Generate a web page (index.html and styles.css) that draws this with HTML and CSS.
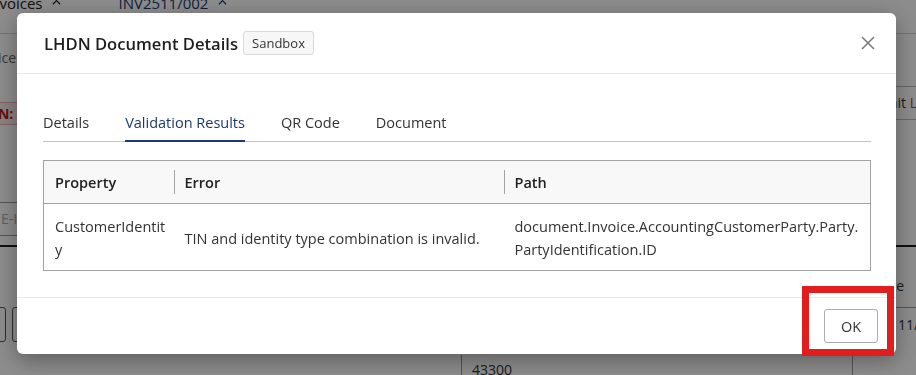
FILE: index.html
```html
<!DOCTYPE html>
<html lang="en">
<head>
  <meta charset="UTF-8">
  <meta name="viewport" content="width=device-width, initial-scale=1.0">
  <title>LHDN Document Details</title>
  <link rel="stylesheet" href="styles.css">
</head>
<body>
  <!-- page that sits behind the dialog -->
  <div class="app">
    <nav class="app-tabs">
      <span class="app-tab">Invoices
        <svg class="caret" viewBox="0 0 10 6"><path d="M1 5.5L5 1.5L9 5.5"/></svg>
      </span>
      <span class="app-tab active">INV2511/002
        <svg class="caret" viewBox="0 0 10 6"><path d="M1 5.5L5 1.5L9 5.5"/></svg>
      </span>
    </nav>
    <div class="app-crumb"><span>Invoice</span></div>
    <div class="app-bar">
      <span class="app-status">LHDN:</span>
      <span class="app-submit">Submit <b>LHDN</b></span>
    </div>
    <div class="app-form">
      <span class="app-input">E-Invoice No.</span>
    </div>
    <div class="app-line"></div>
    <div class="app-head"><span class="app-label">Date</span></div>
    <div class="app-actions">
      <div class="app-btns">
        <span class="app-btn"></span>
        <span class="app-btn"></span>
      </div>
      <span class="app-date">11/11/2025</span>
    </div>
    <div class="app-rows">
      <span class="app-cell"></span>
      <span class="app-cell">43300</span>
      <span class="app-cell"></span>
    </div>
  </div>

  <div class="backdrop"></div>

  <div class="modal">
    <div class="modal-header">
      <h3 class="modal-title">LHDN Document Details</h3>
      <span class="badge">Sandbox</span>
      <button class="close" aria-label="Close">
        <svg viewBox="0 0 14 14"><path d="M1 1L13 13M13 1L1 13"/></svg>
      </button>
    </div>

    <div class="modal-body">
      <div class="tabs">
        <a class="tab">Details</a>
        <a class="tab active">Validation Results</a>
        <a class="tab">QR Code</a>
        <a class="tab">Document</a>
      </div>

      <table class="results">
        <colgroup>
          <col class="col-prop">
          <col class="col-error">
          <col>
        </colgroup>
        <thead>
          <tr>
            <th>Property</th>
            <th>Error</th>
            <th>Path</th>
          </tr>
        </thead>
        <tbody>
          <tr>
            <td>CustomerIdentity</td>
            <td>TIN and identity type combination is invalid.</td>
            <td>document.Invoice.AccountingCustomerParty.Party.PartyIdentification.ID</td>
          </tr>
        </tbody>
      </table>
    </div>

    <div class="modal-footer">
      <button class="btn">OK</button>
    </div>
  </div>

  <!-- highlight drawn over the screenshot -->
  <div class="callout"></div>
</body>
</html>
```

FILE: styles.css
```css
body {
  margin: 0;
  font-family: 'Open Sans', 'Noto Sans', sans-serif;
  background-color: #ffffff;
  color: #333333;
  overflow: hidden;
}

/* background page */
.app {
  width: 916px;
  height: 375px;
  overflow: hidden;
  font-size: 14px;
}

.app-tabs {
  display: flex;
  box-sizing: border-box;
  height: 34px;
  border-bottom: 1px solid #d4d4d4;
}

.app-tab {
  display: flex;
  align-items: flex-start;
  gap: 10px;
  height: 20px;
  margin-top: -7px;
  margin-left: -14px;
  font-size: 15px;
  line-height: 20px;
  color: #222;
}

.app-tab.active {
  margin-left: 57px;
  color: #1b3b6f;
}

.caret {
  width: 9px;
  height: 6px;
  margin-top: 6px;
  fill: none;
  stroke: currentColor;
  stroke-width: 1.4;
}

.app-crumb {
  padding: 14px 0 18px;
  line-height: 20px;
  color: #666;
}

.app-crumb span {
  margin-left: -30px;
}

.app-bar {
  display: flex;
  justify-content: space-between;
  align-items: flex-start;
  height: 39px;
}

.app-status {
  margin: 16px 0 0 -38px;
  padding: 0 6px;
  height: 21px;
  line-height: 21px;
  border: 1px solid #e7b3b3;
  background-color: #fbeaea;
  color: #b11c1c;
  font-weight: 700;
}

.app-submit {
  box-sizing: border-box;
  height: 34px;
  margin-right: -43px;
  padding: 0 10px;
  line-height: 32px;
  border: 1px solid #bbb;
  border-radius: 3px;
  color: #333;
}

.app-submit b {
  color: #a0521d;
  font-weight: 400;
}

.app-form {
  padding-top: 77px;
}

.app-input {
  display: block;
  box-sizing: border-box;
  width: 300px;
  height: 34px;
  margin-left: -10px;
  padding-left: 10px;
  line-height: 32px;
  border: 1px solid #999;
  color: #aaa;
}

.app-line {
  height: 2px;
  margin-top: 9px;
  background-color: #1c1c1c;
}

.app-head {
  display: flex;
  justify-content: flex-end;
  height: 60px;
}

.app-label {
  margin: 29px 12px 0 0;
  line-height: 20px;
}

.app-actions {
  display: flex;
  justify-content: space-between;
  height: 35px;
}

.app-btns {
  display: flex;
  gap: 6px;
  margin-left: -40px;
}

.app-btn {
  box-sizing: border-box;
  width: 46px;
  height: 35px;
  border: 1px solid #555;
  border-radius: 3px;
}

.app-date {
  box-sizing: border-box;
  width: 90px;
  height: 35px;
  margin-right: -26px;
  padding-left: 45px;
  line-height: 33px;
  border: 1px solid #999;
  border-bottom: none;
  white-space: nowrap;
  overflow: hidden;
}

.app-rows {
  display: grid;
  grid-template-columns: 461px 391px 1fr;
  margin-top: 13px;
  height: 20px;
}

.app-cell + .app-cell {
  border-left: 1px solid #999;
  padding: 5px 10px 0;
  line-height: 20px;
}

/* dialog */
.backdrop {
  position: fixed;
  inset: 0;
  background-color: rgba(0, 0, 0, 0.45);
}

.modal {
  position: fixed;
  top: 13px;
  left: 17px;
  width: 879px;
  background-color: #fff;
  border-radius: 6px;
  box-shadow: 0 6px 22px rgba(0, 0, 0, 0.35);
}

.modal-header {
  display: flex;
  align-items: center;
  height: 60px;
  padding: 0 21px 0 27px;
  border-bottom: 1px solid #e9e9e9;
}

.modal-title {
  margin: 0;
  font-size: 16.6px;
  font-weight: 600;
  color: #1e1e1e;
}

.badge {
  margin-left: 5px;
  padding: 2px 8px;
  line-height: 18px;
  font-size: 13px;
  font-weight: 500;
  color: #333;
  background-color: #f7f7f7;
  border: 1px solid #d9d9d9;
  border-radius: 3px;
}

.close {
  margin-left: auto;
  padding: 0;
  width: 14px;
  height: 14px;
  background: none;
  border: none;
}

.close svg {
  display: block;
  width: 14px;
  height: 14px;
  stroke: #7a7a7a;
  stroke-width: 1.5;
}

.modal-body {
  padding: 26px 25px 26px 26px;
}

.tabs {
  display: flex;
  gap: 36px;
  border-bottom: 1px solid #c4c4c4;
}

.tab {
  padding: 12px 0 6px;
  margin-bottom: -1px;
  font-size: 14.5px;
  line-height: 22px;
  color: #333;
  border-bottom: 2px solid transparent;
}

.tab.active {
  color: #1b3b6f;
  border-bottom-color: #1b3b6f;
}

.results {
  width: 100%;
  margin-top: 18px;
  border-collapse: collapse;
  table-layout: fixed;
  border: 1px solid #a3a3a3;
  font-size: 14.5px;
}

.col-prop {
  width: 130px;
}

.col-error {
  width: 330px;
}

.results th {
  position: relative;
  padding: 11px 6px 9px 11px;
  line-height: 22px;
  text-align: left;
  font-weight: 600;
  color: #222;
  background-color: #f8f8f8;
  border-bottom: 1px solid #a3a3a3;
}

.results th + th::before {
  content: '';
  position: absolute;
  left: 0;
  top: 9px;
  bottom: 9px;
  width: 1px;
  background-color: #a3a3a3;
}

.results td {
  padding: 11px 6px 9px 11px;
  line-height: 23px;
  vertical-align: middle;
  color: #333;
  word-break: break-all;
}

.modal-footer {
  display: flex;
  justify-content: flex-end;
  padding: 11px 18px;
  border-top: 1px solid #e9e9e9;
}

.btn {
  width: 54px;
  height: 34px;
  font-family: inherit;
  font-size: 14.5px;
  color: #333;
  background-color: #fff;
  border: 1px solid #adadad;
  border-radius: 3px;
}

.callout {
  position: fixed;
  left: 802px;
  top: 286px;
  box-sizing: border-box;
  width: 92px;
  height: 70px;
  border: 7px solid #e21d1d;
}
```
